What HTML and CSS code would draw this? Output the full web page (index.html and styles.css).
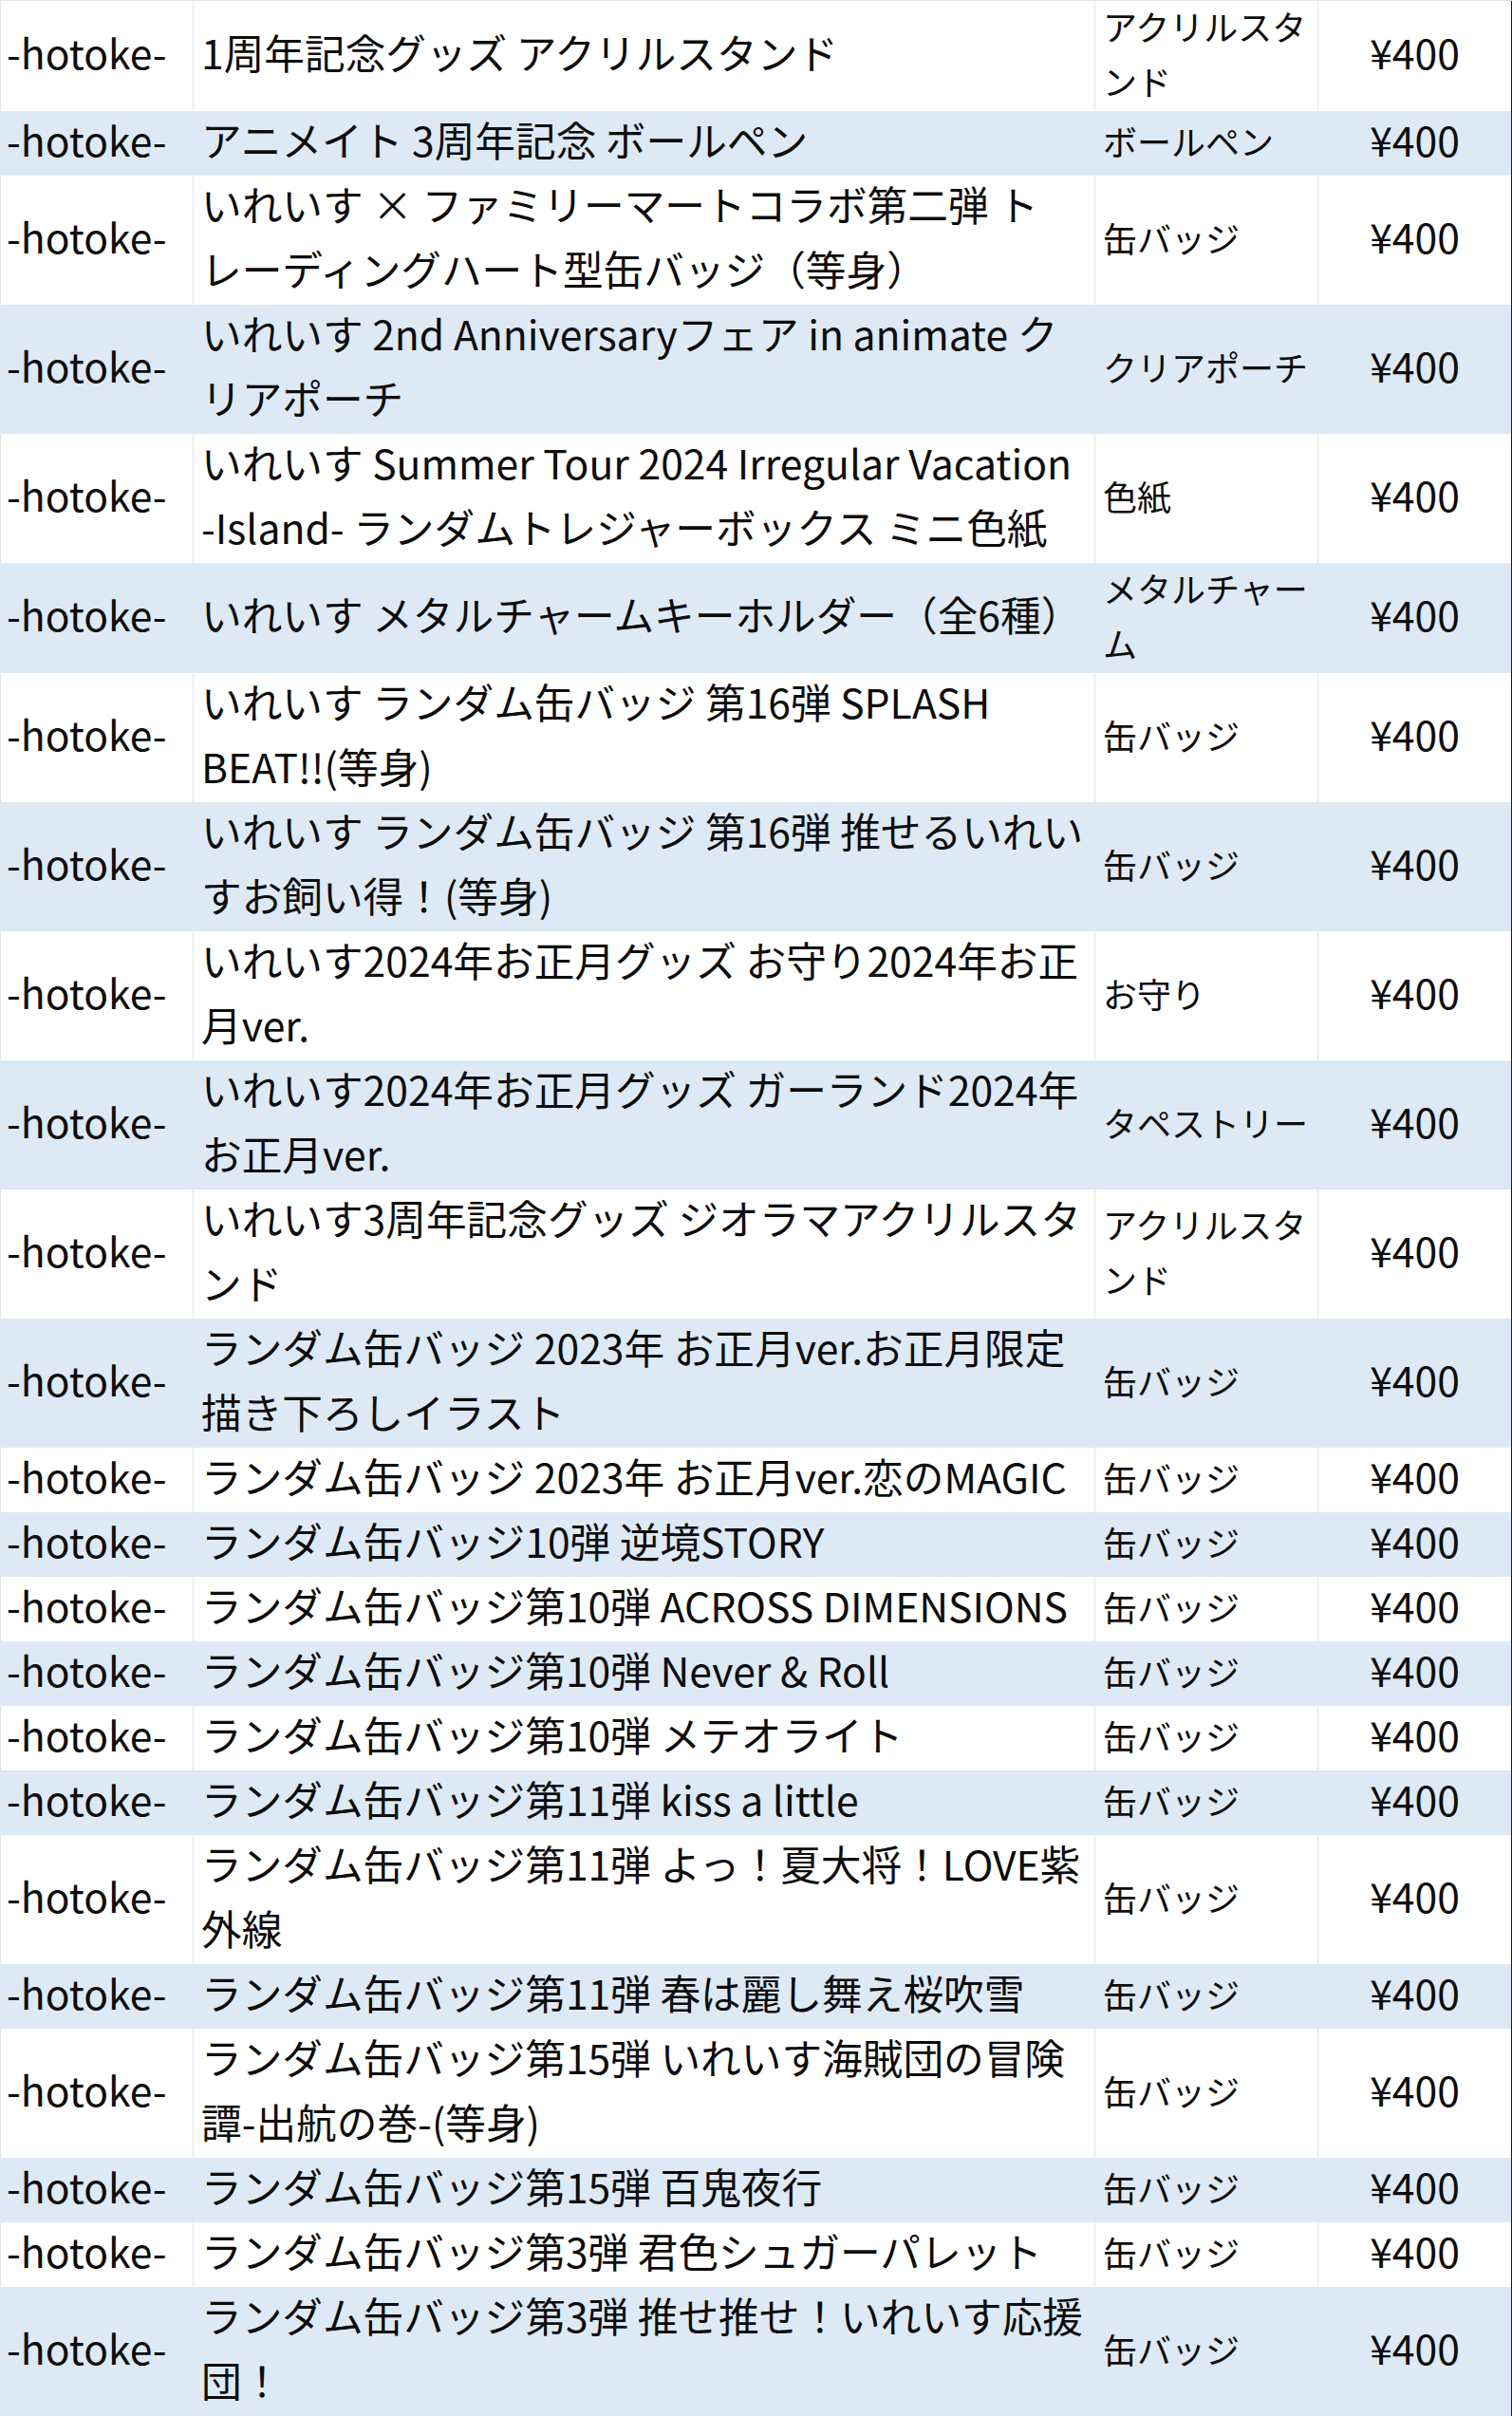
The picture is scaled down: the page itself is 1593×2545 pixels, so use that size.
FILE: index.html
```html
<!DOCTYPE html>
<html lang="ja">
<head>
<meta charset="utf-8">
<title>グッズ一覧</title>
<link rel="stylesheet" href="styles.css">
</head>
<body>
<table class="goods">
<colgroup>
<col class="c-owner">
<col class="c-name">
<col class="c-type">
<col class="c-price">
</colgroup>
<tbody>
<tr><td class="owner"><div class="v">-hotoke-</div></td><td class="name"><div class="v">1周年記念グッズ アクリルスタンド</div></td><td class="type"><div class="v">アクリルスタンド</div></td><td class="price"><div class="v">¥400</div></td></tr>
<tr class="alt"><td class="owner"><div class="v">-hotoke-</div></td><td class="name"><div class="v">アニメイト 3周年記念 ボールペン</div></td><td class="type"><div class="v">ボールペン</div></td><td class="price"><div class="v">¥400</div></td></tr>
<tr><td class="owner"><div class="v">-hotoke-</div></td><td class="name"><div class="v">いれいす × ファミリーマートコラボ第二弾 トレーディングハート型缶バッジ（等身）</div></td><td class="type"><div class="v">缶バッジ</div></td><td class="price"><div class="v">¥400</div></td></tr>
<tr class="alt"><td class="owner"><div class="v">-hotoke-</div></td><td class="name"><div class="v">いれいす 2nd Anniversaryフェア in animate クリアポーチ</div></td><td class="type"><div class="v">クリアポーチ</div></td><td class="price"><div class="v">¥400</div></td></tr>
<tr><td class="owner"><div class="v">-hotoke-</div></td><td class="name"><div class="v">いれいす Summer Tour 2024 Irregular Vacation -Island- ランダムトレジャーボックス ミニ色紙</div></td><td class="type"><div class="v">色紙</div></td><td class="price"><div class="v">¥400</div></td></tr>
<tr class="alt"><td class="owner"><div class="v">-hotoke-</div></td><td class="name"><div class="v">いれいす メタルチャームキーホルダー（全6種）</div></td><td class="type"><div class="v">メタルチャーム</div></td><td class="price"><div class="v">¥400</div></td></tr>
<tr><td class="owner"><div class="v">-hotoke-</div></td><td class="name"><div class="v">いれいす ランダム缶バッジ 第16弾 SPLASH BEAT!!(等身)</div></td><td class="type"><div class="v">缶バッジ</div></td><td class="price"><div class="v">¥400</div></td></tr>
<tr class="alt"><td class="owner"><div class="v">-hotoke-</div></td><td class="name"><div class="v">いれいす ランダム缶バッジ 第16弾 推せるいれいすお飼い得！(等身)</div></td><td class="type"><div class="v">缶バッジ</div></td><td class="price"><div class="v">¥400</div></td></tr>
<tr><td class="owner"><div class="v">-hotoke-</div></td><td class="name"><div class="v">いれいす2024年お正月グッズ お守り2024年お正月ver.</div></td><td class="type"><div class="v">お守り</div></td><td class="price"><div class="v">¥400</div></td></tr>
<tr class="alt"><td class="owner"><div class="v">-hotoke-</div></td><td class="name"><div class="v">いれいす2024年お正月グッズ ガーランド2024年お正月ver.</div></td><td class="type"><div class="v">タペストリー</div></td><td class="price"><div class="v">¥400</div></td></tr>
<tr><td class="owner"><div class="v">-hotoke-</div></td><td class="name"><div class="v">いれいす3周年記念グッズ ジオラマアクリルスタンド</div></td><td class="type"><div class="v">アクリルスタンド</div></td><td class="price"><div class="v">¥400</div></td></tr>
<tr class="alt"><td class="owner"><div class="v">-hotoke-</div></td><td class="name"><div class="v">ランダム缶バッジ 2023年 お正月ver.お正月限定描き下ろしイラスト</div></td><td class="type"><div class="v">缶バッジ</div></td><td class="price"><div class="v">¥400</div></td></tr>
<tr><td class="owner"><div class="v">-hotoke-</div></td><td class="name"><div class="v">ランダム缶バッジ 2023年 お正月ver.恋のMAGIC</div></td><td class="type"><div class="v">缶バッジ</div></td><td class="price"><div class="v">¥400</div></td></tr>
<tr class="alt"><td class="owner"><div class="v">-hotoke-</div></td><td class="name"><div class="v">ランダム缶バッジ10弾 逆境STORY</div></td><td class="type"><div class="v">缶バッジ</div></td><td class="price"><div class="v">¥400</div></td></tr>
<tr><td class="owner"><div class="v">-hotoke-</div></td><td class="name"><div class="v">ランダム缶バッジ第10弾 ACROSS DIMENSIONS</div></td><td class="type"><div class="v">缶バッジ</div></td><td class="price"><div class="v">¥400</div></td></tr>
<tr class="alt"><td class="owner"><div class="v">-hotoke-</div></td><td class="name"><div class="v">ランダム缶バッジ第10弾 Never &amp; Roll</div></td><td class="type"><div class="v">缶バッジ</div></td><td class="price"><div class="v">¥400</div></td></tr>
<tr><td class="owner"><div class="v">-hotoke-</div></td><td class="name"><div class="v">ランダム缶バッジ第10弾 メテオライト</div></td><td class="type"><div class="v">缶バッジ</div></td><td class="price"><div class="v">¥400</div></td></tr>
<tr class="alt"><td class="owner"><div class="v">-hotoke-</div></td><td class="name"><div class="v">ランダム缶バッジ第11弾 kiss a little</div></td><td class="type"><div class="v">缶バッジ</div></td><td class="price"><div class="v">¥400</div></td></tr>
<tr><td class="owner"><div class="v">-hotoke-</div></td><td class="name"><div class="v">ランダム缶バッジ第11弾 よっ！夏大将！LOVE紫外線</div></td><td class="type"><div class="v">缶バッジ</div></td><td class="price"><div class="v">¥400</div></td></tr>
<tr class="alt"><td class="owner"><div class="v">-hotoke-</div></td><td class="name"><div class="v">ランダム缶バッジ第11弾 春は麗し舞え桜吹雪</div></td><td class="type"><div class="v">缶バッジ</div></td><td class="price"><div class="v">¥400</div></td></tr>
<tr><td class="owner"><div class="v">-hotoke-</div></td><td class="name"><div class="v">ランダム缶バッジ第15弾 いれいす海賊団の冒険譚-出航の巻-(等身)</div></td><td class="type"><div class="v">缶バッジ</div></td><td class="price"><div class="v">¥400</div></td></tr>
<tr class="alt"><td class="owner"><div class="v">-hotoke-</div></td><td class="name"><div class="v">ランダム缶バッジ第15弾 百鬼夜行</div></td><td class="type"><div class="v">缶バッジ</div></td><td class="price"><div class="v">¥400</div></td></tr>
<tr><td class="owner"><div class="v">-hotoke-</div></td><td class="name"><div class="v">ランダム缶バッジ第3弾 君色シュガーパレット</div></td><td class="type"><div class="v">缶バッジ</div></td><td class="price"><div class="v">¥400</div></td></tr>
<tr class="alt"><td class="owner"><div class="v">-hotoke-</div></td><td class="name"><div class="v">ランダム缶バッジ第3弾 推せ推せ！いれいす応援団！</div></td><td class="type"><div class="v">缶バッジ</div></td><td class="price"><div class="v">¥400</div></td></tr>
</tbody>
</table>
</body>
</html>
```
FILE: styles.css
```css
html, body {
  margin: 0;
  padding: 0;
  background: #ffffff;
}

body {
  font-family: "Noto Sans CJK JP", "Noto Sans", sans-serif;
  color: #0d0d0d;
}

.goods {
  width: 1593px;
  table-layout: fixed;
  border-collapse: separate;
  border-spacing: 0;
  border-top: 1px solid #e3e3e3;
}

.c-owner { width: 204px; }
.c-name  { width: 950px; }
.c-type  { width: 235px; }
.c-price { width: 204px; }

.goods td {
  font-size: 42.67px;
  line-height: 68px;
  padding: 0 8px;
  vertical-align: middle;
  border-right: 1px solid #e3e3e3;
  background: #ffffff;
  overflow-wrap: break-word;
  line-break: strict;
}

/* the glyphs sit a little above the middle of each line */
.goods .v {
  margin: -4px 0 4px;
}

.goods td.owner {
  border-left: 1px solid #e3e3e3;
  padding: 0 4px 0 6px;
  white-space: nowrap;
}

.goods td.type {
  font-size: 36px;
  line-height: 58px;
}

.goods td.type .v {
  margin: -3px 0 3px;
}

.goods td.price {
  text-align: center;
  border-right: 1px solid #1a1a1a;
}

.goods tr.alt td {
  background: #dde9f5;
  border-right-color: transparent;
  border-left-color: transparent;
}

.goods tr.alt td.price {
  border-right-color: #1a1a1a;
}
```
